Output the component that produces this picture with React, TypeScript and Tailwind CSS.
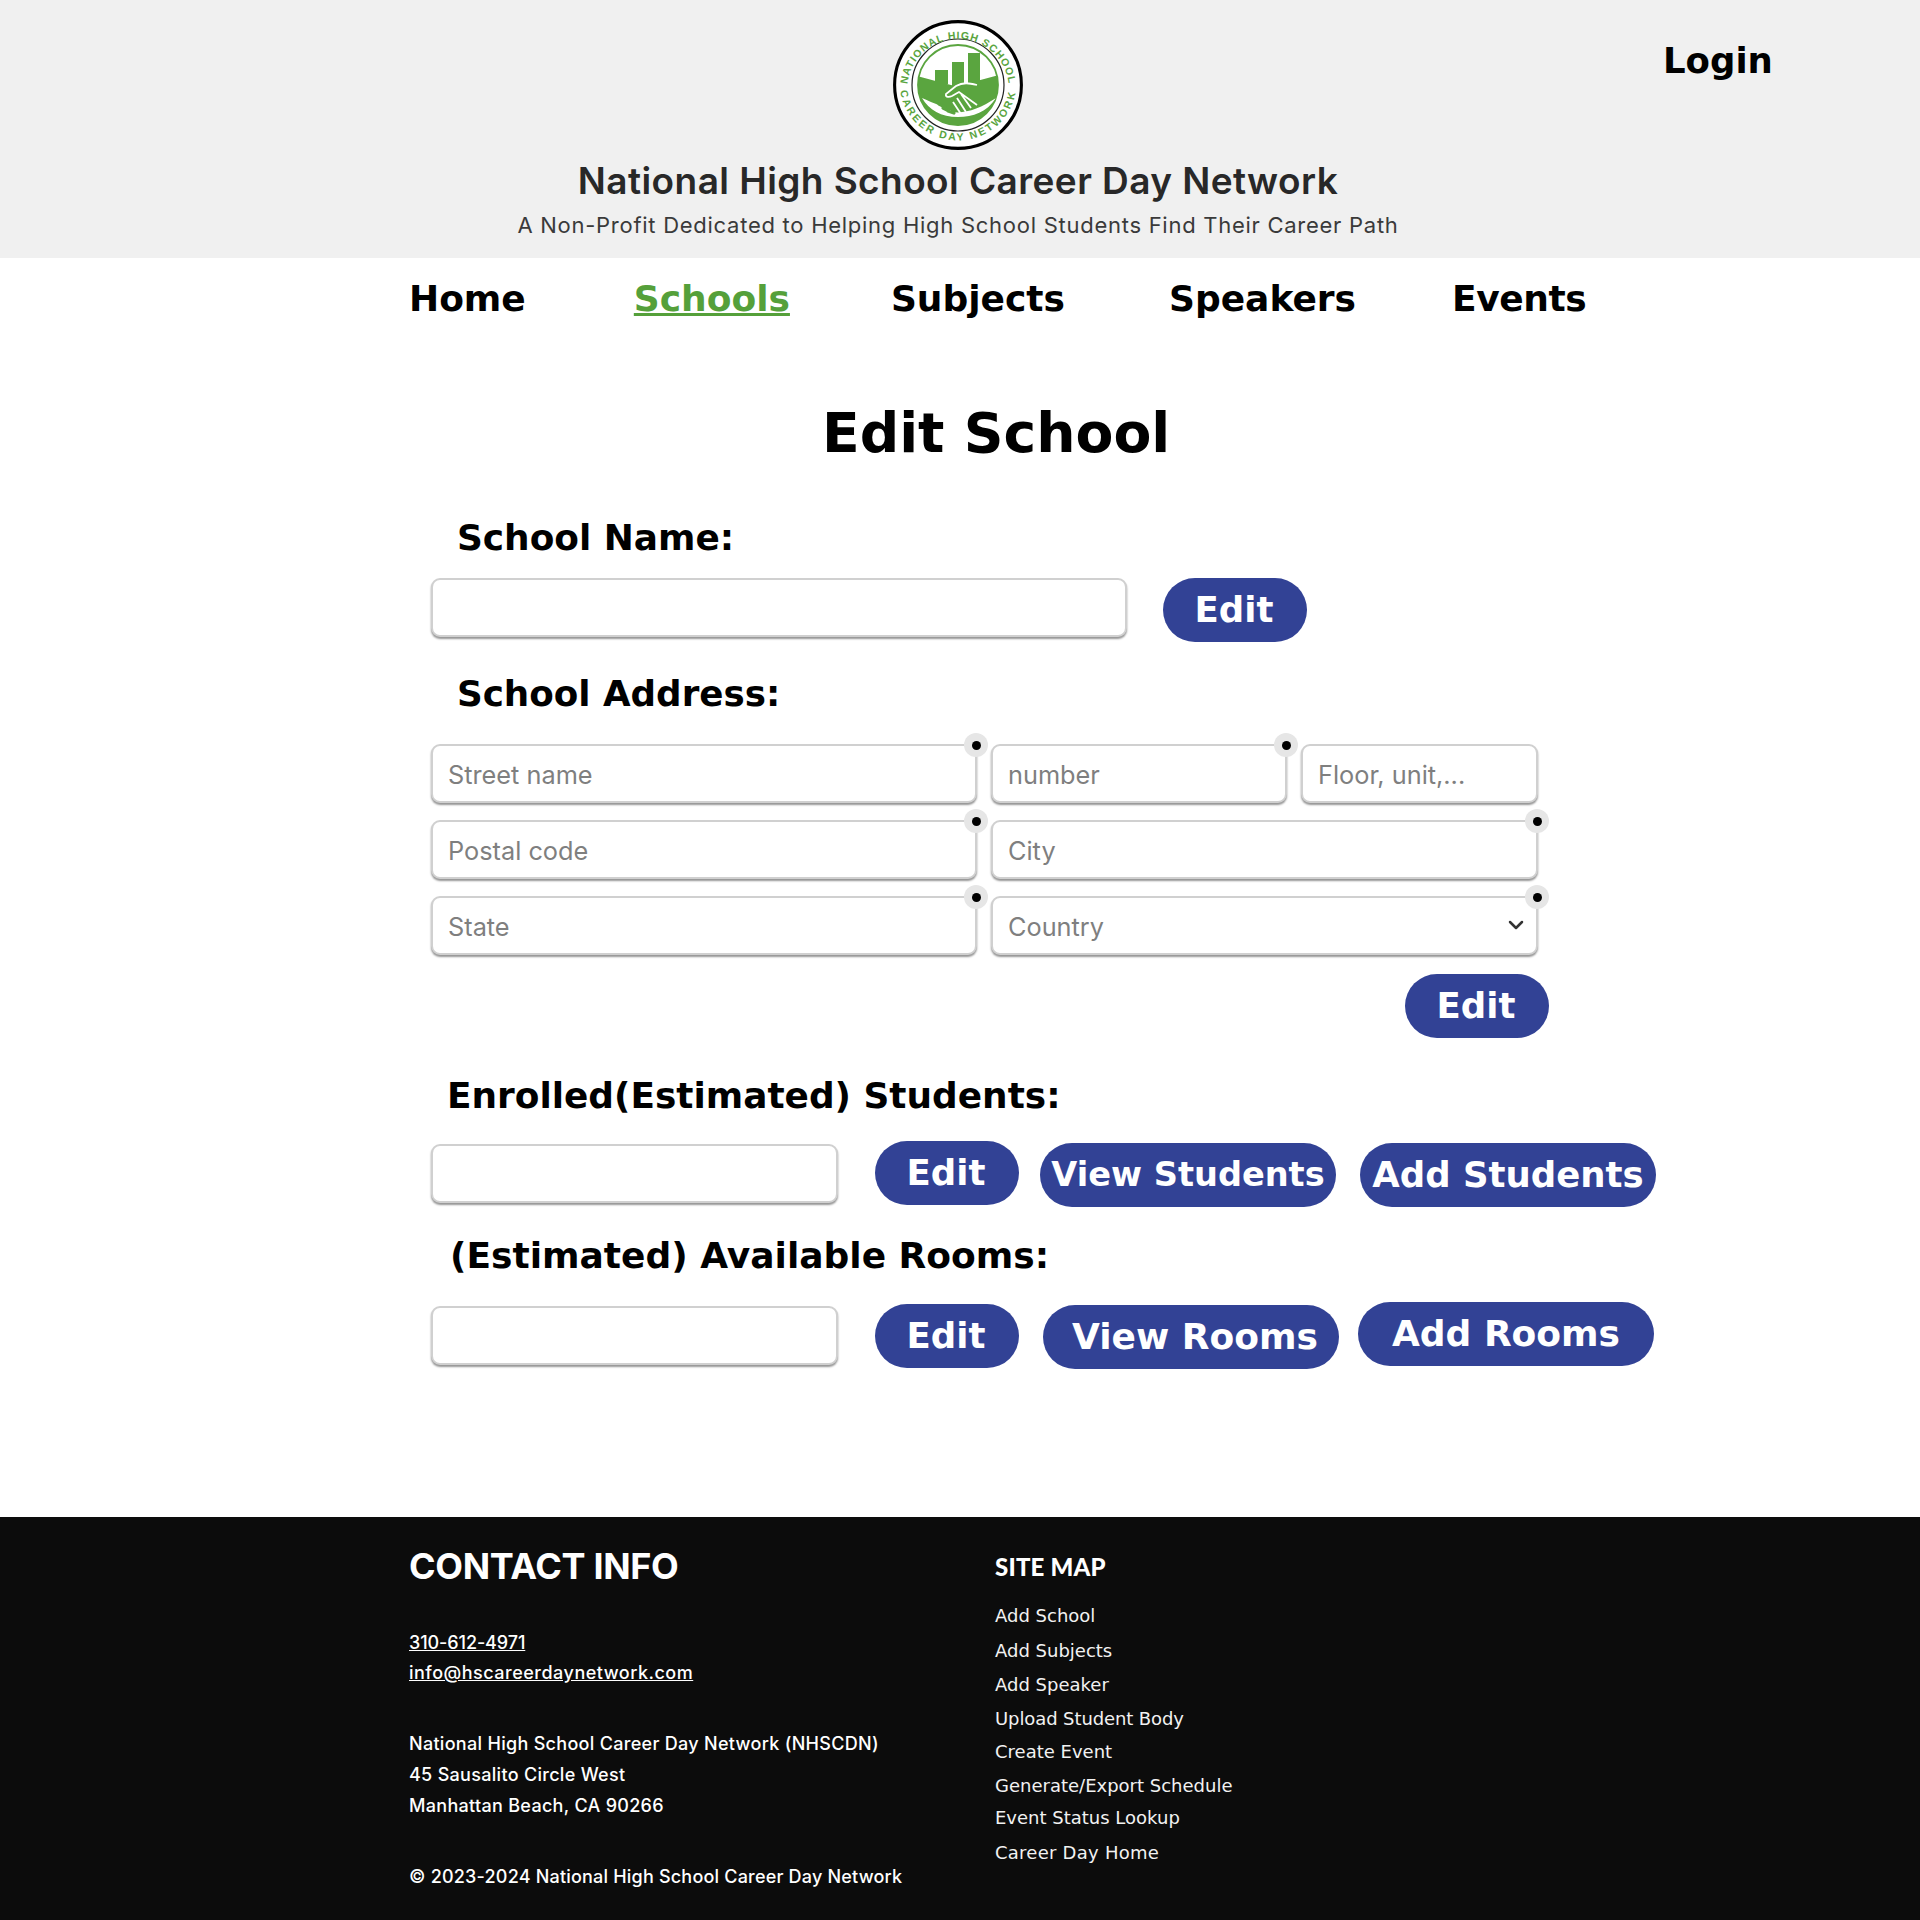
import React from 'react';
import { ChevronDown } from 'lucide-react';

const navItems = [
    { label: 'Home', cls: 'ml-0 text-black' },
    { label: 'Schools', cls: 'ml-[108px] text-[#55a03a] underline' },
    { label: 'Subjects', cls: 'ml-[101px] text-black' },
    { label: 'Speakers', cls: 'ml-[104px] text-black' },
    { label: 'Events', cls: 'ml-[96px] text-black tracking-[-0.4px]' },
];

const siteLinks = [
    { label: 'Add School', cls: 'mt-[20px]' },
    { label: 'Add Subjects', cls: 'mt-[8px]' },
    { label: 'Add Speaker', cls: 'mt-[7px]' },
    { label: 'Upload Student Body', cls: 'mt-[7px] tracking-[-0.1px]' },
    { label: 'Create Event', cls: 'mt-[6px]' },
    { label: 'Generate/Export Schedule', cls: 'mt-[7px]' },
    { label: 'Event Status Lookup', cls: 'mt-[5px]' },
    { label: 'Career Day Home', cls: 'mt-[8px] tracking-[0.25px]' },
];

const Logo = () => (
    <svg viewBox="0 0 130 130" className="w-[130px] h-[130px]">
        <defs>
            <path id="arcTop" d="M 14 70 A 51 51 0 0 1 116 70" />
            <path id="arcBottom" d="M 6.5 62 A 58.5 58.5 0 0 0 123.5 62" />
            <clipPath id="disc"><circle cx="65" cy="65" r="40" /></clipPath>
        </defs>
        <circle cx="65" cy="65" r="63.4" fill="#fff" stroke="#000" strokeWidth="3.1" />
        <circle cx="65" cy="65" r="46" fill="#fff" stroke="#222" strokeWidth="1.2" />
        <text fill="#5aa53f" fontSize="10.5" fontWeight="700" fontFamily="Liberation Sans, sans-serif" letterSpacing="0.9">
            <textPath href="#arcTop" startOffset="50%" textAnchor="middle">NATIONAL HIGH SCHOOL</textPath>
        </text>
        <text fill="#5aa53f" fontSize="10.5" fontWeight="700" fontFamily="Liberation Sans, sans-serif" letterSpacing="2.2">
            <textPath href="#arcBottom" startOffset="50%" textAnchor="middle">CAREER DAY NETWORK</textPath>
        </text>
        <circle cx="65" cy="65" r="40" fill="#fff" stroke="#5aa53f" strokeWidth="1.8" />
        <g clipPath="url(#disc)">
            <path d="M24 56 L50 63 L62 66 L80 62 L106 55 V110 H24 Z" fill="#5aa53f" />
            <path d="M29 78 C42 84 50 86 60 92 C72 94 88 88 103 78 C94 92 80 97 65 97 C48 97 36 90 29 78 Z" fill="#fff" />
        </g>
        <rect x="42" y="50" width="13" height="14" fill="#5aa53f" />
        <rect x="59" y="42" width="12" height="24" fill="#5aa53f" />
        <rect x="75" y="33" width="12" height="32" fill="#5aa53f" />
        <path d="M84 65 C76 63 70 62 63 66 L53 74 C52 78 57 77 59 76 L66 72 L84 85 M68 74 L78 88 M64 78 L73 92 M60 82 L68 94" fill="none" stroke="#fff" strokeWidth="1.8" />
        <path d="M46 84 l6 3 M50 88 l6 3 M55 91 l6 2" stroke="#5aa53f" strokeWidth="3.2" strokeLinecap="round" />
    </svg>
);

const Required = () => (
    <span className="absolute -top-[11px] -right-[11px] w-[24px] h-[24px] rounded-full bg-[#e6e6e6] flex items-center justify-center">
        <span className="w-[9px] h-[9px] rounded-full bg-black" />
    </span>
);

const fieldCls = "w-full h-full rounded-[9px] border-2 border-[#d0d0d0] bg-white pl-[15px] pr-[15px] pt-[2px] font-['Inter',sans-serif] text-[25.3px] text-[#7f7f7f] placeholder:text-[#7f7f7f] shadow-[0_2px_2px_rgba(0,0,0,0.42)] outline-none";

const Field = ({ placeholder, required, cls }: { placeholder?: string; required?: boolean; cls: string }) => (
    <div className={`relative h-[59px] shrink-0 ${cls}`}>
        <input placeholder={placeholder} className={fieldCls} />
        {required && <Required />}
    </div>
);

const Pill = ({ label, cls }: { label: string; cls: string }) => (
    <button className={`h-[64px] shrink-0 rounded-full bg-[#324295] text-white font-bold leading-none whitespace-nowrap ${cls}`}>
        {label}
    </button>
);

const Label = ({ text, cls }: { text: string; cls: string }) => (
    <h2 className={`leading-[44px] font-bold text-black whitespace-nowrap ${cls}`}>{text}</h2>
);

export default function App() {
    return (
        <div className="w-[1920px] min-h-[1920px] bg-white flex flex-col font-['DejaVu_Sans',sans-serif]">
            <header className="h-[258px] bg-[#f0f0f0] flex items-start">
                <div className="ml-[517px] w-[882px] flex flex-col items-center">
                    <div className="mt-[20px]"><Logo /></div>
                    <div className="mt-[9px] font-['Inter',sans-serif] font-semibold text-[37px] leading-[44px] text-[#282828] whitespace-nowrap tracking-[0.42px]">National High School Career Day Network</div>
                    <div className="mt-[7px] font-['Inter',sans-serif] text-[22px] leading-[30px] text-[#3a3a3a] whitespace-nowrap tracking-[0.73px]">A Non-Profit Dedicated to Helping High School Students Find Their Career Path</div>
                </div>
                <div className="ml-[264px] mt-[39px] text-[35.5px] leading-[44px] font-bold text-black">Login</div>
            </header>

            <nav className="h-[80px] pt-[2px] pl-[409px] flex items-center">
                {navItems.map((item) => (
                    <a key={item.label} className={`text-[36px] font-bold leading-[44px] whitespace-nowrap ${item.cls}`}>{item.label}</a>
                ))}
            </nav>

            <main className="h-[1179px] pl-[431px] flex flex-col items-start">
                <h1 className="mt-[63px] ml-[391px] text-[55.2px] leading-[64px] font-bold text-black whitespace-nowrap">Edit School</h1>

                <Label text="School Name:" cls="mt-[51px] ml-[26px] text-[35.9px]" />
                <div className="mt-[18px] flex items-start">
                    <Field cls="w-[696px]" />
                    <Pill label="Edit" cls="w-[144px] ml-[36px] pr-[2px] text-[35.5px]" />
                </div>

                <Label text="School Address:" cls="mt-[30px] ml-[26px] text-[35.7px]" />
                <div className="mt-[28px] flex flex-col gap-[17px] w-[1107px]">
                    <div className="flex gap-[14px]">
                        <Field placeholder="Street name" required cls="w-[546px]" />
                        <Field placeholder="number" required cls="w-[296px]" />
                        <Field placeholder="Floor, unit,..." cls="w-[237px]" />
                    </div>
                    <div className="flex gap-[14px]">
                        <Field placeholder="Postal code" required cls="w-[546px]" />
                        <Field placeholder="City" required cls="w-[547px]" />
                    </div>
                    <div className="flex gap-[14px]">
                        <Field placeholder="State" required cls="w-[546px]" />
                        <div className="relative h-[59px] w-[547px] shrink-0">
                            <select className={`${fieldCls} appearance-none`}>
                                <option>Country</option>
                            </select>
                            <ChevronDown className="absolute right-[10px] top-[17px] text-[#333]" size={24} strokeWidth={2.5} />
                            <Required />
                        </div>
                    </div>
                </div>
                <Pill label="Edit" cls="w-[144px] ml-[974px] mt-[19px] pr-[2px] text-[35.5px]" />

                <Label text="Enrolled(Estimated) Students:" cls="mt-[36px] ml-[16px] text-[35.9px]" />
                <div className="mt-[23px] flex items-start">
                    <Field cls="w-[407px] mt-[3px]" />
                    <Pill label="Edit" cls="w-[144px] ml-[37px] pr-[2px] text-[35.5px]" />
                    <Pill label="View Students" cls="w-[296px] ml-[21px] mt-[2px] text-[33.6px]" />
                    <Pill label="Add Students" cls="w-[296px] ml-[24px] mt-[2px] text-[35.5px]" />
                </div>

                <Label text="(Estimated) Available Rooms:" cls="mt-[27px] ml-[19px] text-[36px]" />
                <div className="mt-[24px] flex items-start">
                    <Field cls="w-[407px] mt-[4px]" />
                    <Pill label="Edit" cls="w-[144px] ml-[37px] mt-[2px] pr-[2px] text-[35.5px]" />
                    <Pill label="View Rooms" cls="w-[296px] ml-[24px] mt-[3px] pl-[8px] text-[36px]" />
                    <Pill label="Add Rooms" cls="w-[296px] ml-[19px] text-[36px]" />
                </div>
            </main>

            <footer className="h-[403px] bg-[#0c0c0c] text-white pl-[409px] flex items-start">
                <div className="w-[586px] font-['Inter',sans-serif] font-medium text-[18px] leading-[30px] tracking-[0.3px]">
                    <div className="mt-[27px] text-[36px] leading-[44px] font-bold tracking-[-0.35px]">CONTACT INFO</div>
                    <a className="block mt-[40px] underline tracking-[-0.1px]">310-612-4971</a>
                    <a className="block underline tracking-[0.5px]">info@hscareerdaynetwork.com</a>
                    <div className="mt-[41px]">National High School Career Day Network (NHSCDN)</div>
                    <div className="leading-[31px]">45 Sausalito Circle West</div>
                    <div className="leading-[31px]">Manhattan Beach, CA 90266</div>
                    <div className="mt-[41px] tracking-[0.2px]">© 2023-2024 National High School Career Day Network</div>
                </div>
                <div className="flex flex-col">
                    <div className="mt-[35px] text-[24px] leading-[30px] font-['Lato',sans-serif] font-black tracking-[0.2px]">SITE MAP</div>
                    {siteLinks.map((link) => (
                        <a key={link.label} className={`text-[18px] leading-[27px] text-[#f2f2f2] whitespace-nowrap ${link.cls}`}>{link.label}</a>
                    ))}
                </div>
            </footer>
        </div>
    );
}
